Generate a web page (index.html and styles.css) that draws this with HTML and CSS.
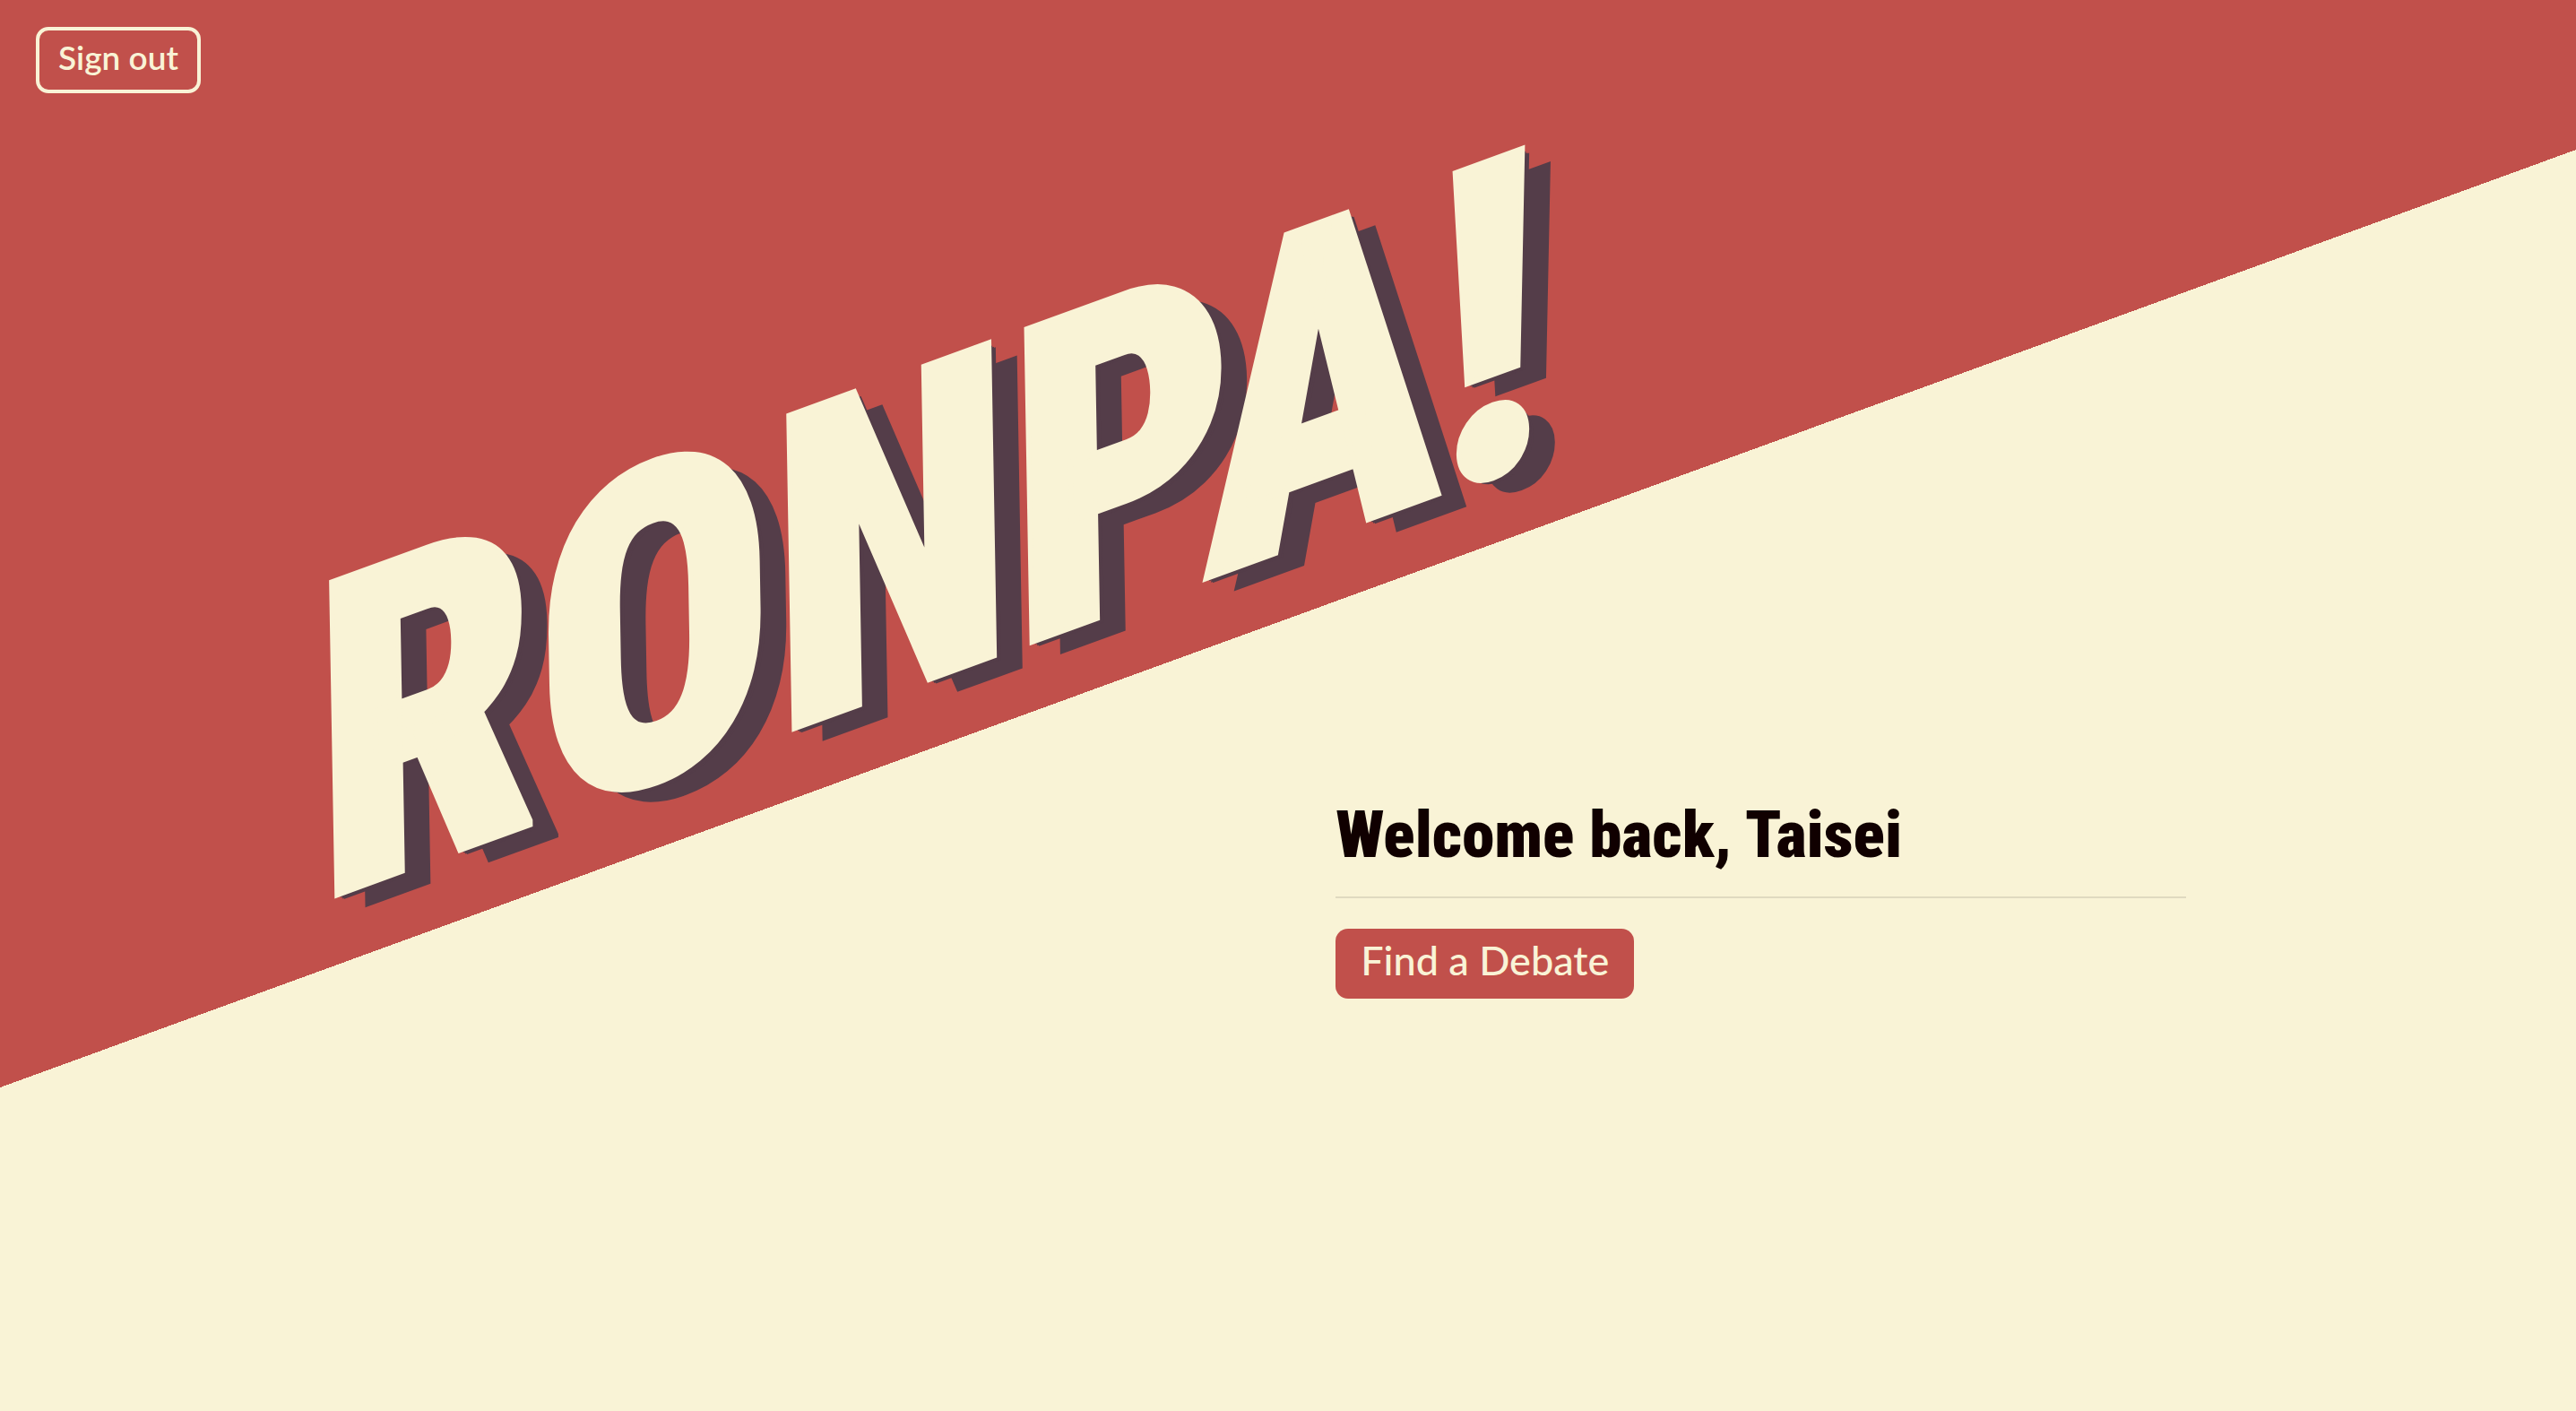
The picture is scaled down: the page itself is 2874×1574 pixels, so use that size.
FILE: index.html
```html
<!DOCTYPE html>
<html lang="en">
<head>
<meta charset="utf-8">
<meta name="viewport" content="width=device-width, initial-scale=1">
<title>Ronpa!</title>
<link rel="stylesheet" href="styles.css">
</head>
<body>
<header class="topbar">
  <button type="button" class="btn btn-outline">Sign out</button>
</header>
<main>
  <h1 class="logo">RONPA!</h1>
  <section class="welcome">
    <h2 class="welcome-title">Welcome back, Taisei</h2>
    <button type="button" class="btn btn-primary">Find a Debate</button>
  </section>
</main>
</body>
</html>
```
FILE: styles.css
```css
:root {
  --red: #c1504b;
  --cream: #f9f3d6;
  --plum: #543d49;
}

* {
  box-sizing: border-box;
}

body {
  margin: 0;
  min-height: 100vh;
  background: linear-gradient(160deg, var(--red) 46.3%, var(--cream) 46.3%);
  color: #100000;
  font-family: Lato, "Open Sans", sans-serif;
}

.topbar {
  padding: 30px 40px 0;
}

.btn {
  display: block;
  border: 0;
  border-radius: 14px;
  color: var(--cream);
  font-family: inherit;
  cursor: pointer;
}

.btn-outline {
  padding: 8px 21px 14px;
  border: 4px solid var(--cream);
  background: transparent;
  font-size: 37px;
  font-weight: 600;
  line-height: 44px;
}

.btn-primary {
  padding: 8px 28px 16px;
  background: var(--red);
  font-size: 45px;
  font-weight: 500;
  line-height: 54px;
}

.logo {
  width: max-content;
  margin: 254px 0 0 308px;
  color: var(--cream);
  font-family: "Roboto Condensed", "Open Sans Condensed", sans-serif;
  font-size: 464px;
  font-weight: 900;
  line-height: 464px;
  -webkit-text-stroke: 6px var(--cream);
  text-shadow:
    2px 2px var(--plum),
    4px 4px var(--plum),
    6px 6px var(--plum),
    8px 7px var(--plum),
    33px 24px var(--plum);
  transform: rotate(-20deg) skewX(-19deg);
}

.welcome {
  width: 33%;
  margin: 65px 0 0 51.85%;
}

.welcome-title {
  margin: 0 0 34px;
  padding-bottom: 25px;
  border-bottom: 2px solid #e0dac0;
  font-family: "Roboto Condensed", "Open Sans Condensed", sans-serif;
  font-size: 73px;
  font-weight: 900;
  line-height: 88px;
}
```
